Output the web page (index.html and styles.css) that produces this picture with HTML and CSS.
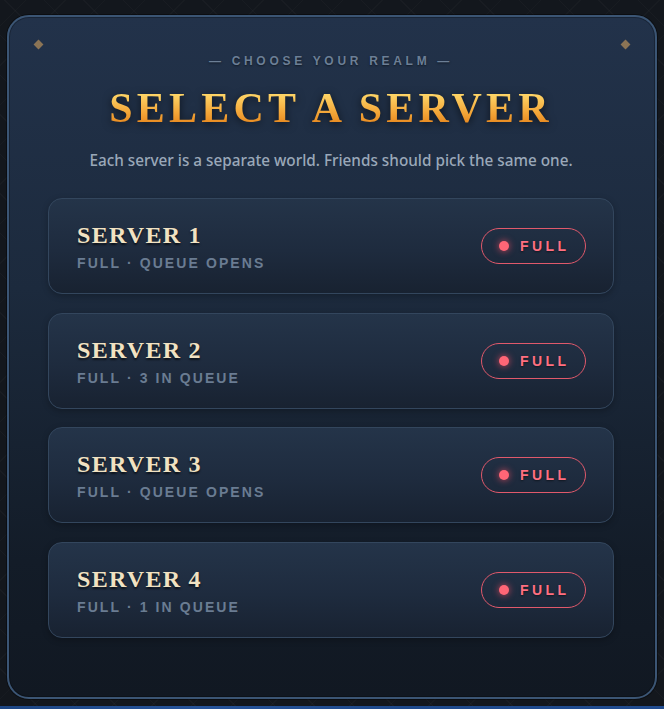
FILE: index.html
```html
<!DOCTYPE html>
<html lang="en">
<head>
<meta charset="utf-8">
<title>Select a Server</title>
<link rel="stylesheet" href="styles.css">
</head>
<body>
<main class="panel">
  <span class="corner corner-left"></span>
  <span class="corner corner-right"></span>
  <header class="head">
    <p class="eyebrow">— Choose your realm —</p>
    <h1 class="title">Select a Server</h1>
    <p class="desc">Each server is a separate world. Friends should pick the same one.</p>
  </header>
  <ul class="list">
    <li class="card">
      <div class="info">
        <div class="name">Server 1</div>
        <div class="status">Full · Queue opens</div>
      </div>
      <span class="badge"><span class="dot"></span>Full</span>
    </li>
    <li class="card">
      <div class="info">
        <div class="name">Server 2</div>
        <div class="status">Full · 3 in queue</div>
      </div>
      <span class="badge"><span class="dot"></span>Full</span>
    </li>
    <li class="card">
      <div class="info">
        <div class="name">Server 3</div>
        <div class="status">Full · Queue opens</div>
      </div>
      <span class="badge"><span class="dot"></span>Full</span>
    </li>
    <li class="card">
      <div class="info">
        <div class="name">Server 4</div>
        <div class="status">Full · 1 in queue</div>
      </div>
      <span class="badge"><span class="dot"></span>Full</span>
    </li>
  </ul>
</main>
<div class="below"></div>
</body>
</html>
```
FILE: styles.css
```css
* { box-sizing: border-box; }
html, body { margin: 0; padding: 0; }
body {
  background-color: #13171d;
  background-image:
    repeating-linear-gradient(45deg, rgba(255,255,255,0.025) 0 1px, transparent 1px 28px),
    repeating-linear-gradient(-45deg, rgba(255,255,255,0.02) 0 1px, transparent 1px 28px);
  font-family: "Noto Sans", "Open Sans", sans-serif;
  overflow: hidden;
  height: 709px;
}
.panel {
  position: relative;
  margin: 15px 7px 0 7px;
  height: 684px;
  border: 2px solid #3b5574;
  border-radius: 22px;
  background: linear-gradient(180deg, #22324a 0%, #1c2a3d 40%, #131c28 80%, #111822 100%);
  box-shadow: inset 0 0 0 1px rgba(0,0,0,0.25), 0 0 0 1px rgba(0,0,0,0.4);
  padding: 36px 41px 59px 39px;
}
.corner {
  position: absolute;
  top: 24px;
  width: 7px;
  height: 7px;
  background: #8b7455;
  transform: rotate(45deg);
}
.corner-left { left: 26px; }
.corner-right { right: 26px; }
.head { text-align: center; }
.eyebrow {
  margin: 0;
  font-family: "Liberation Sans", Arial, sans-serif;
  font-weight: 700;
  font-size: 12px;
  line-height: 16px;
  letter-spacing: 3.7px;
  text-transform: uppercase;
  color: #6c7f96;
  text-shadow: 0 1px 2px rgba(0,0,0,0.5);
}
.title {
  margin: 14px 0 0;
  font-family: "Liberation Serif", "Times New Roman", serif;
  font-weight: 700;
  font-size: 42px;
  line-height: 50px;
  letter-spacing: 4.2px;
  text-transform: uppercase;
  background: linear-gradient(180deg, #ffd86a 20%, #f3a537 60%, #e5841c 85%);
  -webkit-background-clip: text;
  background-clip: text;
  -webkit-text-fill-color: transparent;
  color: transparent;
  filter: drop-shadow(0 2px 4px rgba(0,0,0,0.6));
}
.desc {
  margin: 17px 0 0;
  font-size: 15.3px;
  line-height: 20px;
  font-weight: 500;
  color: #9aa8b9;
}
.list {
  list-style: none;
  margin: 28px 0 0;
  padding: 0;
  display: flex;
  flex-direction: column;
  gap: 18.7px;
}
.card {
  height: 96px;
  display: flex;
  align-items: center;
  justify-content: space-between;
  padding: 0 27px 0 28px;
  border: 1px solid #33465d;
  border-radius: 14px;
  background: linear-gradient(180deg, #243449 0%, #1e2b3e 55%, #182231 100%);
  box-shadow: 0 2px 6px rgba(0,0,0,0.25);
}
.info {
  display: flex;
  flex-direction: column;
  gap: 6px;
  margin-top: 0;
}
.name {
  font-family: "Liberation Serif", "Times New Roman", serif;
  font-weight: 700;
  font-size: 24px;
  line-height: 28px;
  letter-spacing: 1.3px;
  text-transform: uppercase;
  color: #f1e2c2;
  text-shadow: 0 2px 2px rgba(0,0,0,0.6);
}
.status {
  font-family: "Liberation Sans", Arial, sans-serif;
  font-weight: 700;
  font-size: 14px;
  line-height: 16px;
  letter-spacing: 2.1px;
  text-transform: uppercase;
  color: #6a7c92;
}
.badge {
  display: flex;
  align-items: center;
  gap: 11px;
  height: 36px;
  width: 105px;
  padding-left: 17px;
  border: 1px solid #e0596b;
  border-radius: 18px;
  font-family: "Liberation Sans", Arial, sans-serif;
  font-weight: 700;
  font-size: 14px;
  letter-spacing: 3.4px;
  text-transform: uppercase;
  color: #ff6f80;
  text-shadow: 0 1px 2px rgba(0,0,0,0.5);
}
.dot {
  width: 10px;
  height: 10px;
  border-radius: 50%;
  background: #ff6676;
  box-shadow: 0 0 6px 1px rgba(255,80,100,0.55);
}
.below {
  margin-top: 7px;
  height: 20px;
  background: linear-gradient(90deg, #1d4684, #27549a 30%, #1f4a8c 60%, #214c90);
}
```
